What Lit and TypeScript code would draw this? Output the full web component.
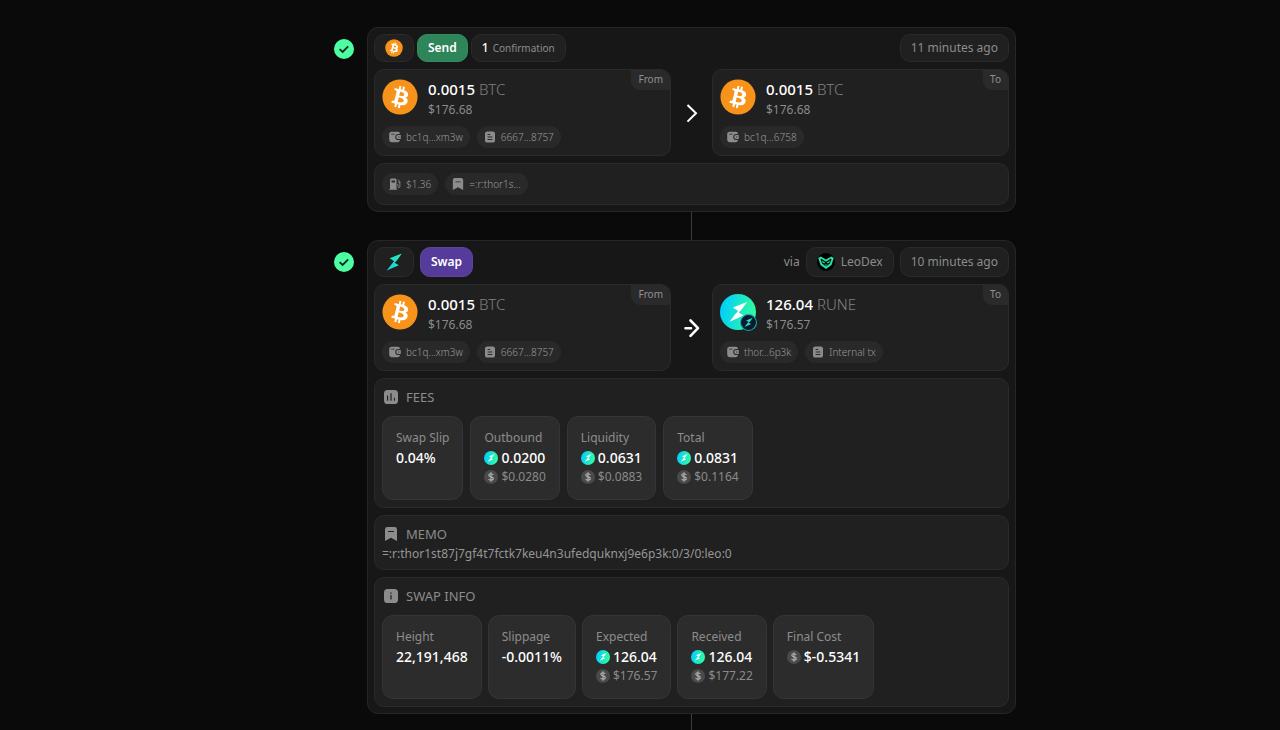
import { LitElement, html, svg, css, nothing, TemplateResult } from "lit";
import { customElement, property } from "lit/decorators.js";

const BTC_GLYPH = svg`<path fill="#fff" d="M23.19 14.02c.314-2.096-1.283-3.223-3.465-3.975l.708-2.84-1.728-.43-.69 2.765c-.454-.114-.92-.22-1.385-.326l.695-2.783L15.596 6l-.708 2.839c-.376-.086-.746-.17-1.104-.26l.002-.009-2.384-.595-.46 1.846s1.283.294 1.256.312c.7.175.826.638.805 1.006l-.806 3.235c.048.012.11.03.18.057l-.183-.045-1.13 4.532c-.086.212-.303.531-.793.41.018.025-1.256-.313-1.256-.313l-.858 1.978 2.25.561c.418.105.828.215 1.231.318l-.715 2.872 1.727.43.708-2.84c.472.127.93.245 1.378.357l-.706 2.828 1.728.43.715-2.866c2.948.558 5.164.333 6.097-2.333.752-2.146-.037-3.385-1.588-4.192 1.13-.26 1.98-1.003 2.207-2.538zm-3.95 5.538c-.533 2.147-4.148.986-5.32.695l.95-3.805c1.172.293 4.929.872 4.37 3.11zm.535-5.569c-.487 1.953-3.495.96-4.47.717l.86-3.45c.975.243 4.118.696 3.61 2.733z"/>`;

const BOLT = "M24 7 11.500 12l4.700 3.100L13.500 18 8.500 24.600 21 19l-4.400-2.600 2.800-2.800z";

const ICONS: Record<string, TemplateResult> = {
  btc: html`<svg viewBox="0 0 32 32"><circle cx="16" cy="16" r="15.600" fill="#f7931a"/>${BTC_GLYPH}</svg>`,
  rune: html`<svg viewBox="0 0 32 32"><defs><linearGradient id="g" x1="0" x2="1" y1=".4" y2=".6"><stop offset="0" stop-color="#00ccff"/><stop offset="1" stop-color="#33ff99"/></linearGradient></defs><circle cx="16" cy="16" r="16" fill="url(#g)"/><path fill="#fff" d=${BOLT}/></svg>`,
  runeDark: html`<svg viewBox="0 0 32 32"><circle cx="16" cy="16" r="15" fill="#0c1a2b" stroke="#14a8b8" stroke-width="2"/><path fill="#1be0d0" d=${BOLT}/></svg>`,
  thor: html`<svg viewBox="7 6.500 18 18.500"><defs><linearGradient id="t" x1="0" x2="1" y1="1" y2="0"><stop offset="0" stop-color="#12cfe8"/><stop offset="1" stop-color="#2af0ac"/></linearGradient></defs><path fill="url(#t)" d=${BOLT}/></svg>`,
  leo: html`<svg viewBox="0 0 18 18"><circle cx="9" cy="9" r="9" fill="#000"/><g fill="#22e3a8"><path fill-rule="evenodd" d="m1.200 5 2.600-1.600L9 6.600l5.200-3.200L16.800 5l-2.300 7L9 16l-5.500-4zm2.300 1.100 1.600 4.500L9 13.600l3.900-3 1.600-4.500-.9-.3L9 8.700 4.400 5.800z"/><path d="m5 7.600 3 1.900-.4 1.100-1.900-.9zM13 7.600l-3 1.900.4 1.100 1.900-.9zM7.600 11.400h2.800L9 12.900z"/></g></svg>`,
  dollar: html`<svg viewBox="0 0 14 14"><circle cx="7" cy="7" r="7" fill="#4a4a4a"/><path d="M9.300 4.900C8.900 4.100 8.100 3.700 7 3.700c-1.300 0-2.200.6-2.200 1.600 0 2.200 4.500 1 4.500 3.300 0 1-.9 1.700-2.300 1.700-1.200 0-2.100-.5-2.400-1.400M7 2.300v9.400" fill="none" stroke="#b4b4b4" stroke-width="1.100"/></svg>`,
  wallet: html`<svg viewBox="0 0 12 12"><path fill="currentColor" fill-rule="evenodd" d="M2.200.8h6.600a2.200 2.200 0 0 1 2.200 2.100H9.300a3.100 3.100 0 0 0 0 6.200H11A2.200 2.200 0 0 1 8.800 11.200H2.600A2.400 2.400 0 0 1 .2 8.800V3a2.200 2.200 0 0 1 2-2.200zM2.200 2.800v.8h3.400v-.8zM9.200 4h2.600v4H9.200a2 2 0 0 1 0-4zm0 1.500v1h1.200v-1z"/></svg>`,
  doc: html`<svg viewBox="0 0 12 12"><path fill="currentColor" fill-rule="evenodd" d="M3.200.4h5.600a2.200 2.200 0 0 1 2.200 2.200v6.800a2.200 2.200 0 0 1-2.200 2.200H3.200A2.200 2.200 0 0 1 1 9.400V2.600A2.200 2.200 0 0 1 3.200.4zM3.600 3v.9h2.600V3zm0 2.600v.9h4.800v-.9zm0 2.400v.9h4.800V8z"/></svg>`,
  gas: html`<svg viewBox="0 0 12 12"><path fill="currentColor" fill-rule="evenodd" d="M1 2.200C1 1.200 1.700.5 2.700.5h3.100c1 0 1.700.7 1.700 1.700V11h.7v.8H.2V11H1zm1.500.2v2.200H6V2.400z"/><path d="M8 6.200c1.300 0 1 1.500 1.100 2.600.1 1.200 1.800 1.100 1.800-.2V3.800L9 1.600M9.400 3.600c0 1 .5 1.300 1.500 1.300" fill="none" stroke="currentColor" stroke-width=".9"/></svg>`,
  memo: html`<svg viewBox="0 0 14 14"><path fill="currentColor" fill-rule="evenodd" d="M3.400 0h7.200a2.400 2.400 0 0 1 2.400 2.400V14l-6-3.200L1 14V2.400A2.400 2.400 0 0 1 3.400 0zM4 4v1.100h6V4z"/></svg>`,
  chart: html`<svg viewBox="0 0 14 14"><path fill="currentColor" fill-rule="evenodd" d="M3.600 0h6.800A3.600 3.600 0 0 1 14 3.600v6.800a3.600 3.600 0 0 1-3.600 3.600H3.600A3.600 3.600 0 0 1 0 10.400V3.600A3.600 3.600 0 0 1 3.600 0zM3 5.500v5.200h1.100V5.500zM6.400 3.200v7.500h1.200V3.200zM9.900 7.800v2.900H11V7.800z"/></svg>`,
  info: html`<svg viewBox="0 0 14 14"><path fill="currentColor" fill-rule="evenodd" d="M3.600 0h6.800A3.600 3.600 0 0 1 14 3.600v6.800a3.600 3.600 0 0 1-3.600 3.600H3.600A3.600 3.600 0 0 1 0 10.400V3.600A3.600 3.600 0 0 1 3.600 0zM6.300 3.400v1.400h1.400V3.400zM6.400 6v4.600h1.200V6z"/></svg>`,
  check: html`<svg viewBox="0 0 20 20"><circle cx="10" cy="10" r="10" fill="#4dffa3"/><path d="m5.600 10.200 3 2.700 5.600-5.500" fill="none" stroke="#14241b" stroke-width="1.800"/></svg>`,
  chevron: html`<svg viewBox="0 0 20 20"><path d="m5.500 2 8.500 8.300L5.500 18.600" fill="none" stroke="#fff" stroke-width="2"/></svg>`,
  arrow: html`<svg viewBox="0 0 20 20"><path d="m8.500 2.500 7.500 7.700-7.500 7.700M3.500 10.200H9" fill="none" stroke="#fff" stroke-width="2.600" stroke-linecap="round" stroke-linejoin="round"/></svg>`,
};

interface Chip { icon: string; text: string; }
interface Side { label: string; coin: string; badge?: string; amount: string; asset: string; usd: string; chips: Chip[]; }
interface Stat { label: string; value: string; icon?: string; usd?: string; }

const sender: Side = {
  label: "From", coin: "btc", amount: "0.0015", asset: "BTC", usd: "$176.68",
  chips: [{ icon: "wallet", text: "bc1q...xm3w" }, { icon: "doc", text: "6667...8757" }],
};
const vault: Side = {
  label: "To", coin: "btc", amount: "0.0015", asset: "BTC", usd: "$176.68",
  chips: [{ icon: "wallet", text: "bc1q...6758" }],
};
const receiver: Side = {
  label: "To", coin: "rune", badge: "runeDark", amount: "126.04", asset: "RUNE", usd: "$176.57",
  chips: [{ icon: "wallet", text: "thor...6p3k" }, { icon: "doc", text: "Internal tx" }],
};
const fees: Stat[] = [
  { label: "Swap Slip", value: "0.04%" },
  { label: "Outbound", value: "0.0200", icon: "rune", usd: "$0.0280" },
  { label: "Liquidity", value: "0.0631", icon: "rune", usd: "$0.0883" },
  { label: "Total", value: "0.0831", icon: "rune", usd: "$0.1164" },
];
const info: Stat[] = [
  { label: "Height", value: "22,191,468" },
  { label: "Slippage", value: "-0.0011%" },
  { label: "Expected", value: "126.04", icon: "rune", usd: "$176.57" },
  { label: "Received", value: "126.04", icon: "rune", usd: "$177.22" },
  { label: "Final Cost", value: "$-0.5341", icon: "dollar" },
];

const shared = css`
  * { box-sizing: border-box; }
  svg { display: block; width: 100%; height: 100%; }
  a { color: inherit; text-decoration: none; }
  .panel { background: #202020; border: 1px solid #2a2a2a; border-radius: 10px; }
  .chip {
    display: flex; align-items: center; gap: 5px; height: 22px; padding: 0 7px;
    border-radius: 11px; background: #292929; color: #999;
    font-size: 10px; font-weight: 300; line-height: 16px;
  }
  .chip-icon { width: 12px; height: 12px; flex: none; color: #8c8c8c; }
  .chips { display: flex; gap: 7px; }
`;

const chip = (c: Chip) => html`<a class="chip" href="#"><span class="chip-icon">${ICONS[c.icon]}</span>${c.text}</a>`;

@customElement("transfer-side")
export class TransferSide extends LitElement {
  @property({ attribute: false }) side!: Side;
  static styles = [shared, css`
    :host { display: block; min-width: 0; }
    .panel { position: relative; height: 100%; padding: 9px 7px 7px; overflow: hidden; }
    .tag {
      position: absolute; top: 0; right: 0; padding: 0 7px; height: 20px;
      border-bottom-left-radius: 9px; background: #2a2a2a; color: #909090;
      font-size: 10px; line-height: 18px;
    }
    .coin-row { display: flex; gap: 10px; height: 38px; margin-bottom: 9px; }
    .coin { position: relative; width: 36px; height: 36px; flex: none; }
    .badge { position: absolute; right: -1px; bottom: -1px; width: 17px; height: 17px; }
    .amount { color: #fff; font-size: 15px; line-height: 20px; font-weight: 500; }
    .asset { color: #808080; font-weight: 300; }
    .usd { color: #8a8a8a; font-size: 12px; line-height: 22px; }
  `];
  render() {
    const s = this.side;
    return html`<section class="panel">
      <span class="tag">${s.label}</span>
      <div class="coin-row">
        <span class="coin">${ICONS[s.coin]}${s.badge ? html`<span class="badge">${ICONS[s.badge]}</span>` : nothing}</span>
        <div>
          <div class="amount">${s.amount} <span class="asset">${s.asset}</span></div>
          <div class="usd">${s.usd}</div>
        </div>
      </div>
      <div class="chips">${s.chips.map(chip)}</div>
    </section>`;
  }
}

@customElement("stat-panel")
export class StatPanel extends LitElement {
  @property() heading = "";
  @property() icon = "";
  @property({ attribute: false }) stats: Stat[] = [];
  @property() text = "";
  static styles = [shared, css`
    :host { display: block; }
    .panel { padding: 7px; }
    .heading { display: flex; align-items: center; gap: 8px; margin: 0; padding-left: 2px; color: #8c8c8c; font-size: 13px; font-weight: 400; line-height: 22px; }
    .heading-icon { width: 14px; height: 14px; }
    .stats { display: flex; flex-wrap: wrap; gap: 7px; margin-top: 8px; }
    :host([dense]) .stats { gap: 6px; }
    .stat { min-height: 84px; padding: 12px 13px; border: 1px solid #353535; border-radius: 11px; background: #2c2c2c; }
    .label { color: #8c8c8c; font-size: 12px; line-height: 18px; }
    .line { display: flex; align-items: center; gap: 3px; }
    .mini { width: 14px; height: 14px; }
    .value { color: #fff; font-size: 14px; font-weight: 500; line-height: 22px; }
    .usd { color: #8a8a8a; font-size: 12px; line-height: 16px; }
    .text { margin: 0; color: #969696; font-size: 12px; line-height: 17px; overflow-wrap: anywhere; }
  `];
  render() {
    return html`<section class="panel">
      <h2 class="heading"><span class="heading-icon">${ICONS[this.icon]}</span>${this.heading}</h2>
      ${this.text ? html`<p class="text">${this.text}</p>` : nothing}
      ${this.stats.length ? html`<div class="stats">${this.stats.map((s) => html`<div class="stat">
        <div class="label">${s.label}</div>
        <div class="line value">${s.icon ? html`<span class="mini">${ICONS[s.icon]}</span>` : nothing}${s.value}</div>
        ${s.usd ? html`<div class="line usd"><span class="mini">${ICONS.dollar}</span>${s.usd}</div>` : nothing}
      </div>`)}</div>` : nothing}
    </section>`;
  }
}

@customElement("app-root")
export class AppRoot extends LitElement {
  static styles = [shared, css`
    :host {
      display: block; min-height: 100vh; padding: 27px 16px 0 86px; box-sizing: border-box;
      overflow: hidden; background: #0a0a0a; color: #8c8c8c;
      font-family: "Noto Sans", sans-serif; font-size: 12px; line-height: 18px;
    }
    main { max-width: 682px; margin: 0 auto; }
    .step { display: grid; grid-template-columns: 20px minmax(0, 1fr); column-gap: 13px; }
    .status { width: 20px; height: 20px; margin-top: 12px; }
    .card { display: grid; gap: 7px; padding: 6px; border: 1px solid #262626; border-radius: 11px; background: #171717; }
    .link { grid-column: 2; justify-self: center; width: 1px; height: 28px; background: #3c3c3c; }
    .header { display: flex; gap: 3px; height: 28px; }
    .header-tall { gap: 6px; height: 30px; }
    .pill {
      display: flex; align-items: center; gap: 4px; padding: 0 10px;
      border: 1px solid #2a2a2a; border-radius: 10px; background: #202020;
    }
    .chain { width: 40px; padding: 0; justify-content: center; }
    .chain-icon { width: 18px; height: 18px; }
    .kind { color: #fff; font-weight: 600; }
    .send { border-color: #34895f; background: #2f855a; }
    .swap { border-color: #5b449e; background: #553c9a; }
    .count { color: #fff; font-weight: 500; }
    .small { font-size: 10px; }
    .spacer { flex: 1; }
    .via { align-self: center; }
    .app { gap: 6px; }
    .transfer { display: grid; grid-template-columns: minmax(0, 1fr) 41px minmax(0, 1fr); }
    .direction { align-self: center; justify-self: center; width: 20px; height: 20px; }
    .extras { padding: 9px 7px; }
  `];
  render() {
    return html`<main>
      <article class="step">
        <span class="status">${ICONS.check}</span>
        <div class="card">
          <header class="header">
            <span class="pill chain"><span class="chain-icon">${ICONS.btc}</span></span>
            <span class="pill kind send">Send</span>
            <span class="pill"><span class="count">1</span><span class="small">Confirmation</span></span>
            <span class="spacer"></span>
            <time class="pill">11 minutes ago</time>
          </header>
          <div class="transfer">
            <transfer-side .side=${sender}></transfer-side>
            <span class="direction">${ICONS.chevron}</span>
            <transfer-side .side=${vault}></transfer-side>
          </div>
          <div class="panel extras chips">${chip({ icon: "gas", text: "$1.36" })}${chip({ icon: "memo", text: "=:r:thor1s..." })}</div>
        </div>
        <span class="link"></span>
      </article>
      <article class="step">
        <span class="status">${ICONS.check}</span>
        <div class="card">
          <header class="header header-tall">
            <span class="pill chain"><span class="chain-icon">${ICONS.thor}</span></span>
            <span class="pill kind swap">Swap</span>
            <span class="spacer"></span>
            <span class="via">via</span>
            <a class="pill app" href="#"><span class="chain-icon">${ICONS.leo}</span>LeoDex</a>
            <time class="pill">10 minutes ago</time>
          </header>
          <div class="transfer">
            <transfer-side .side=${sender}></transfer-side>
            <span class="direction">${ICONS.arrow}</span>
            <transfer-side .side=${receiver}></transfer-side>
          </div>
          <stat-panel heading="FEES" icon="chart" .stats=${fees}></stat-panel>
          <stat-panel heading="MEMO" icon="memo" text="=:r:thor1st87j7gf4t7fctk7keu4n3ufedquknxj9e6p3k:0/3/0:leo:0"></stat-panel>
          <stat-panel dense heading="SWAP INFO" icon="info" .stats=${info}></stat-panel>
        </div>
        <span class="link"></span>
      </article>
    </main>`;
  }
}
